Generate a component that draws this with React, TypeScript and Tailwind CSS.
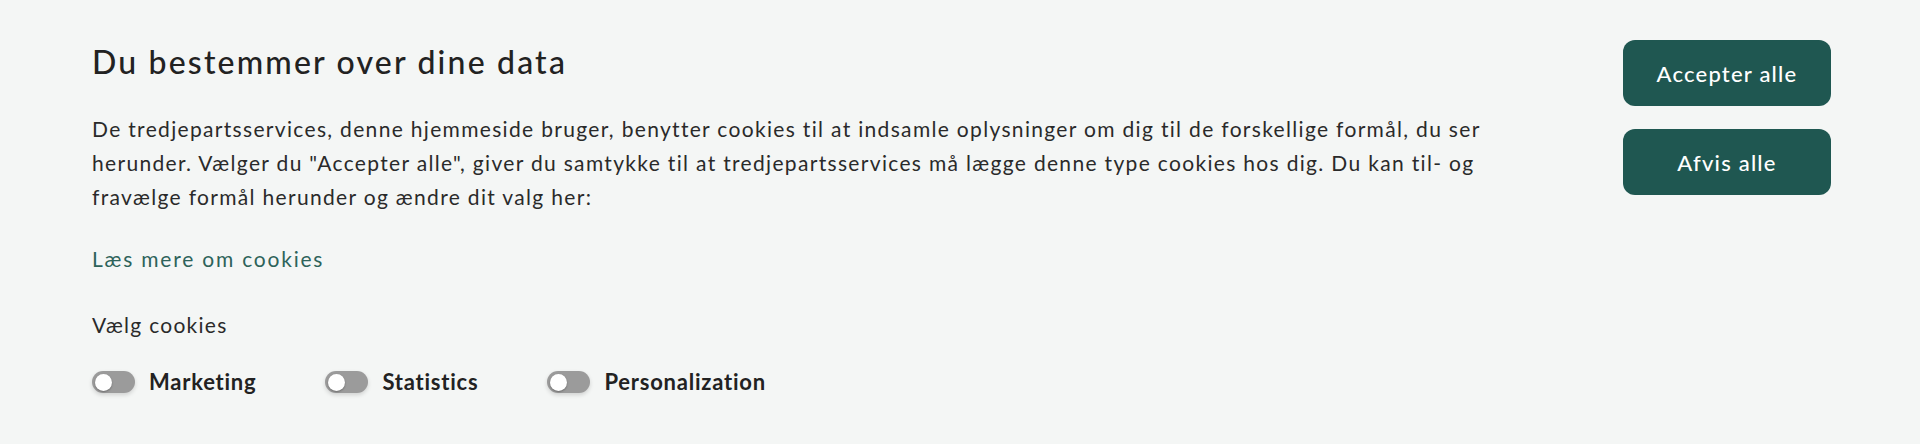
import React from 'react';

const toggles = ['Marketing', 'Statistics', 'Personalization'];

const Toggle: React.FC<{ label: string }> = ({ label }) => (
  <label className="flex items-center gap-[14px] cursor-pointer">
    <span className="relative inline-flex h-[22px] w-[43px] items-center rounded-full bg-[#9b9b9b] shadow-[0_2px_4px_rgba(0,0,0,0.15)]">
      <span className="ml-[3px] h-[17px] w-[17px] rounded-full bg-white shadow-[0_1px_2px_rgba(0,0,0,0.3)]" />
    </span>
    <span className="text-[22px] leading-[34px] font-bold tracking-[0.035em] text-[#222222]">{label}</span>
  </label>
);

export default function App() {
  return (
    <div className="min-h-[444px] w-full bg-[#f4f6f5] font-['Lato',sans-serif] text-[#2a2a2a]">
      <div className="flex justify-between pl-[92px] pr-[89px] pt-10">
        <div className="w-[1400px]">
          <h2 className="mt-0.5 text-[32px] leading-[40px] font-medium tracking-[0.068em] text-[#222222]">
            Du bestemmer over dine data
          </h2>
          <p className="mt-[30px] text-[21px] leading-[34px] tracking-[0.063em]">
            De tredjepartsservices, denne hjemmeside bruger, benytter cookies til at indsamle oplysninger om dig til de forskellige formål, du ser herunder. Vælger du "Accepter alle", giver du samtykke til at tredjepartsservices må lægge denne type cookies hos dig. Du kan til- og fravælge formål herunder og ændre dit valg her:
          </p>
          <a href="#" className="mt-[28px] block text-[21px] leading-[34px] tracking-[0.085em] text-[#2d635a]">
            Læs mere om cookies
          </a>
          <p className="mt-[32px] text-[21px] leading-[34px] tracking-[0.06em]">Vælg cookies</p>
          <div className="mt-[23px] flex items-center gap-[69px]">
            {toggles.map((t) => (
              <Toggle key={t} label={t} />
            ))}
          </div>
        </div>
        <div className="flex w-[208px] flex-col gap-[23px]">
          <button className="h-[66px] rounded-xl bg-[#1f5751] text-[22px] font-medium tracking-[0.055em] text-white">
            Accepter alle
          </button>
          <button className="h-[66px] rounded-xl bg-[#1f5751] text-[22px] font-medium tracking-[0.055em] text-white">
            Afvis alle
          </button>
        </div>
      </div>
    </div>
  );
}
